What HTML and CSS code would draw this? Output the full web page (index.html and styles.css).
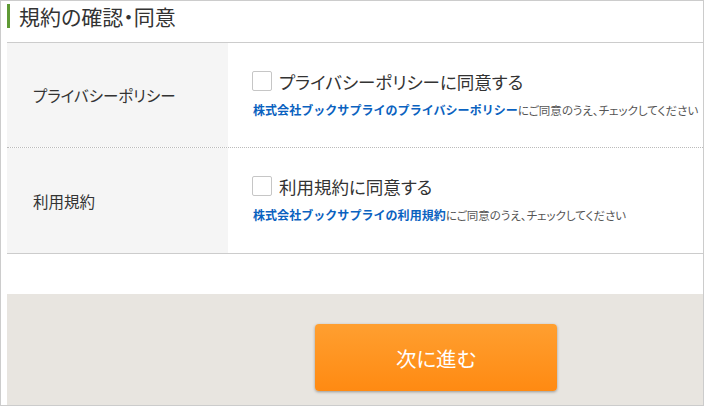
FILE: index.html
```html
<!DOCTYPE html>
<html lang="ja">
<head>
<meta charset="utf-8">
<title>規約の確認・同意</title>
<link rel="stylesheet" href="styles.css">
</head>
<body>
<div class="page">
  <h2 class="heading">規約の確認・同意</h2>
  <div class="terms">
    <div class="row">
      <div class="label">プライバシーポリシー</div>
      <div class="field">
        <label class="check"><span class="box"></span><span>プライバシーポリシーに同意する</span></label>
        <p class="note"><a class="link">株式会社ブックサプライのプライバシーポリシー</a>にご同意のうえ、チェックしてください</p>
      </div>
    </div>
    <div class="row last">
      <div class="label">利用規約</div>
      <div class="field">
        <label class="check"><span class="box"></span><span>利用規約に同意する</span></label>
        <p class="note"><a class="link">株式会社ブックサプライの利用規約</a>にご同意のうえ、チェックしてください</p>
      </div>
    </div>
  </div>
  <div class="actions">
    <button class="next" type="button">次に進む</button>
  </div>
</div>
</body>
</html>
```
FILE: styles.css
```css
html, body {
  margin: 0;
  padding: 0;
  background: #fff;
}
body {
  font-family: "Noto Sans CJK JP", "Noto Sans", sans-serif;
  font-feature-settings: "palt";
  color: #333;
}
.page {
  width: 704px;
  height: 406px;
  box-sizing: border-box;
  border: 1px solid #cccccc;
  padding-left: 6px;
  display: flex;
  flex-direction: column;
  overflow: hidden;
}
.heading {
  margin: 3px 0 14px 0;
  height: 24px;
  line-height: 24px;
  border-left: 3px solid #5f9a35;
  padding-left: 9px;
  font-size: 21px;
  font-weight: normal;
  color: #333;
}
.terms {
  border-top: 1px solid #cccccc;
  border-bottom: 1px solid #cccccc;
}
.row {
  display: grid;
  grid-template-columns: 221px 1fr;
  height: 104px;
  border-bottom: 1px dotted #bbbbbb;
}
.row.last {
  border-bottom: none;
  height: 105px;
}
.label {
  background: #f5f5f5;
  display: flex;
  align-items: center;
  padding-left: 26px;
  font-size: 15.5px;
  color: #333;
}
.field {
  padding: 28px 0 0 24px;
  white-space: nowrap;
}
.check {
  display: flex;
  align-items: center;
  gap: 7px;
  height: 20px;
  font-size: 17.5px;
  color: #333;
}
.box {
  width: 20px;
  height: 20px;
  box-sizing: border-box;
  border: 1px solid #c6c6c6;
  border-radius: 2px;
  background: #fff;
  flex: none;
}
.note {
  margin: 12px 0 0 1px;
  font-size: 11.5px;
  line-height: 14px;
  color: #555;
}
.link {
  color: #0a62c0;
  font-weight: bold;
  font-size: 12px;
  font-feature-settings: normal;
  letter-spacing: 0.05px;
  text-decoration: none;
}
.actions {
  margin-top: 40px;
  flex: 1;
  background: #e8e5e0;
  padding: 30px 0 0 308px;
}
.next {
  width: 242px;
  height: 67px;
  border: none;
  border-radius: 4px;
  background: linear-gradient(#ff9f30, #ff8a12);
  box-shadow: 0 1px 3px rgba(0, 0, 0, 0.35);
  color: #fff;
  font-family: "Noto Sans CJK JP", "Noto Sans", sans-serif;
  font-feature-settings: "palt";
  font-size: 20.5px;
  padding: 0;
  cursor: pointer;
}
```
